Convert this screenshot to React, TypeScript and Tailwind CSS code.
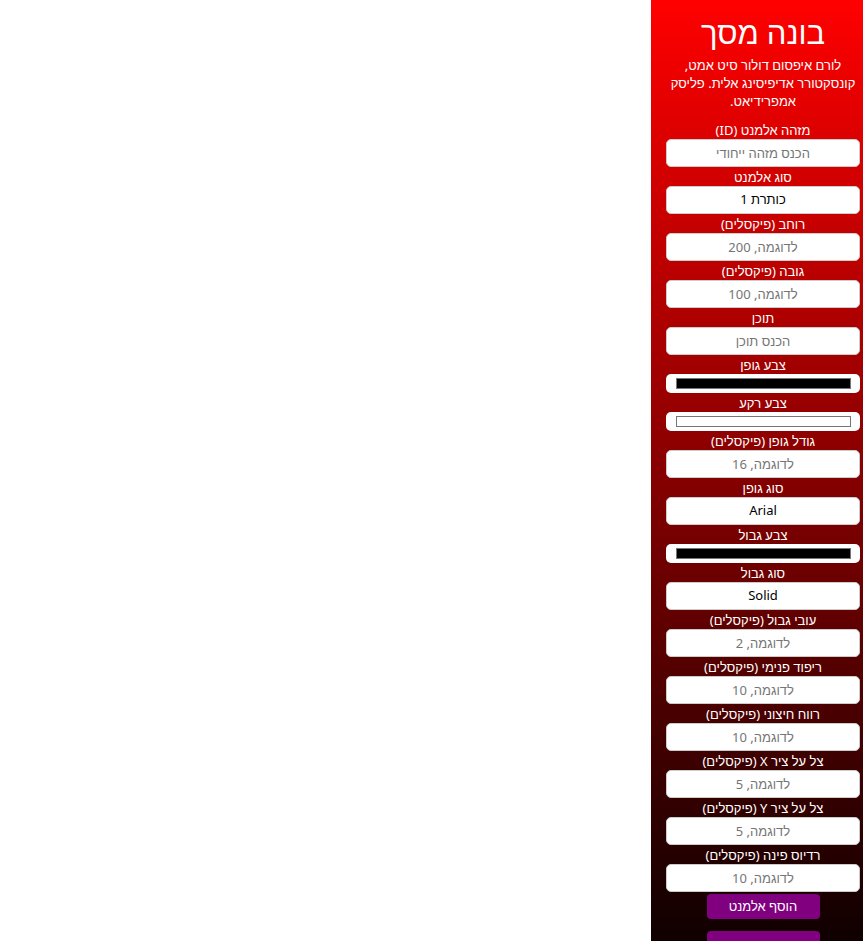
import React from 'react';

type Field =
  | { kind: 'text'; label: string; placeholder: string }
  | { kind: 'select'; label: string; value: string }
  | { kind: 'color'; label: string; swatch: string };

const fields: Field[] = [
  { kind: 'text', label: 'מזהה אלמנט (ID)', placeholder: 'הכנס מזהה ייחודי' },
  { kind: 'select', label: 'סוג אלמנט', value: 'כותרת 1' },
  { kind: 'text', label: 'רוחב (פיקסלים)', placeholder: 'לדוגמה, 200' },
  { kind: 'text', label: 'גובה (פיקסלים)', placeholder: 'לדוגמה, 100' },
  { kind: 'text', label: 'תוכן', placeholder: 'הכנס תוכן' },
  { kind: 'color', label: 'צבע גופן', swatch: 'bg-black' },
  { kind: 'color', label: 'צבע רקע', swatch: 'bg-white' },
  { kind: 'text', label: 'גודל גופן (פיקסלים)', placeholder: 'לדוגמה, 16' },
  { kind: 'select', label: 'סוג גופן', value: 'Arial' },
  { kind: 'color', label: 'צבע גבול', swatch: 'bg-black' },
  { kind: 'select', label: 'סוג גבול', value: 'Solid' },
  { kind: 'text', label: 'עובי גבול (פיקסלים)', placeholder: 'לדוגמה, 2' },
  { kind: 'text', label: 'ריפוד פנימי (פיקסלים)', placeholder: 'לדוגמה, 10' },
  { kind: 'text', label: 'רווח חיצוני (פיקסלים)', placeholder: 'לדוגמה, 10' },
  { kind: 'text', label: 'צל על ציר X (פיקסלים)', placeholder: 'לדוגמה, 5' },
  { kind: 'text', label: 'צל על ציר Y (פיקסלים)', placeholder: 'לדוגמה, 5' },
  { kind: 'text', label: 'רדיוס פינה (פיקסלים)', placeholder: 'לדוגמה, 10' },
];

function FieldControl({ field }: { field: Field }) {
  if (field.kind === 'color') {
    return (
      <div className="h-[19px] w-full rounded-[5px] bg-white flex items-center pl-[10px] pr-[9px]">
        <div className={`h-[11px] w-full border border-[#767676] ${field.swatch}`} />
      </div>
    );
  }
  if (field.kind === 'select') {
    return (
      <select
        defaultValue={field.value}
        className="h-[28px] w-full rounded-[5px] border border-[#cccccc] bg-white text-center [text-align-last:center] appearance-none text-[13px] text-black outline-none"
      >
        <option>{field.value}</option>
      </select>
    );
  }
  return (
    <input
      type="text"
      placeholder={field.placeholder}
      className="h-[28px] w-full rounded-[5px] border border-[#cccccc] bg-white text-center text-[13px] text-black placeholder:text-[#757575] outline-none"
    />
  );
}

export default function App() {
  return (
    <div className="flex h-screen justify-end overflow-hidden bg-white font-['Noto_Sans',sans-serif]">
      {/* Builder panel */}
      <aside
        dir="rtl"
        className="h-[1000px] w-[212px] shrink-0 bg-[linear-gradient(to_bottom,#ff0000,#000000)] pl-[15px] pr-[3px] pt-[12px] text-white"
      >
        <h1 className="text-center text-[31px] leading-[40px]">בונה מסך</h1>
        <p className="mt-[4px] text-center text-[13px] leading-[18px] whitespace-nowrap">
          לורם איפסום דולור סיט אמט,
          <br />
          קונסקטורר אדיפיסינג אלית. פליסק
          <br />
          אמפרידיאט.
        </p>

        <div className="mt-[12px] flex flex-col gap-[2px]">
          {fields.map((field, index) => (
            <div key={index}>
              <label className="block text-center text-[13px] leading-[17px]">{field.label}</label>
              <FieldControl field={field} />
            </div>
          ))}
        </div>

        <div className="mt-[2px] flex flex-col items-center gap-[12px]">
          <button className="h-[25px] w-[113px] rounded-[4px] bg-[#800080] text-[13px] text-white">
            הוסף אלמנט
          </button>
          <button className="h-[32px] w-[113px] rounded-[4px] bg-[#800080] text-[13px] text-white">
            שמור מסך
          </button>
        </div>
      </aside>
    </div>
  );
}
